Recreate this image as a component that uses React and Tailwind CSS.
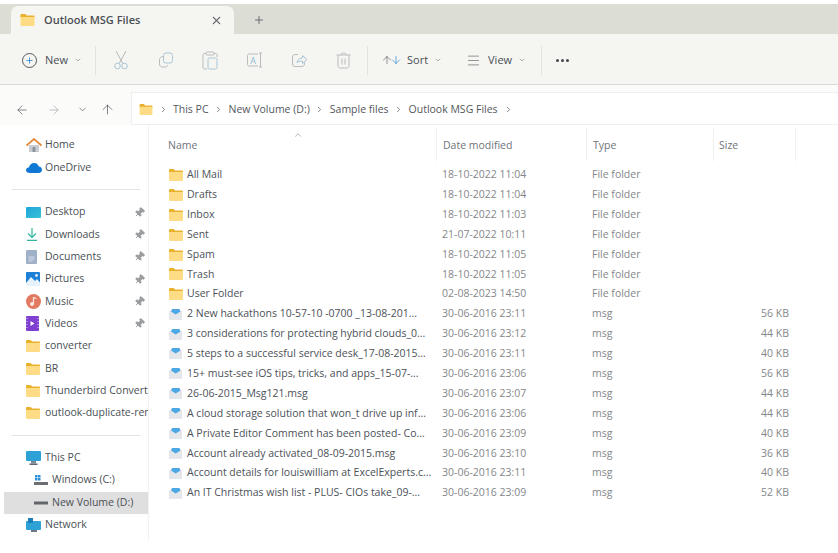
import React from 'react';
import { ArrowLeft, ArrowRight, ArrowUp, ChevronDown, ChevronRight, ChevronUp, Menu, Pin, Plus, X } from 'lucide-react';

const font = { fontFamily: '"Open Sans", "Noto Sans", sans-serif' };

// Folder icon, yellow with a darker tab
const Folder = ({ className = 'w-[14px] h-[12px]' }) => (
  <svg viewBox="0 0 14 12" className={className}>
    <path d="M0 1.2C0 .5.5 0 1.2 0h3.4l1.6 1.6h6.6c.7 0 1.2.5 1.2 1.2V4H0z" fill="#e8b22e" />
    <path d="M0 3h14v7.8c0 .7-.5 1.2-1.2 1.2H1.2C.5 12 0 11.500 0 10.800z" fill="#fddc85" />
  </svg>
);

// Icon of a .msg file: pale envelope with a blue flap
const MsgIcon = () => (
  <svg viewBox="0 0 13 11" className="w-[13px] h-[11px]">
    <rect x="0" y="2" width="13" height="9" fill="#e4e6ea" />
    <path d="M3 0h7.500l1 2.500L6.700 5.500 2 2.500z" fill="#4fa8e6" />
  </svg>
);

const HomeIcon = () => (
  <svg viewBox="0 0 16 14" className="w-4 h-[14px]">
    <path d="M3 7h10v7H3z" fill="#c9ccd1" />
    <path d="M6.500 9h3v5h-3z" fill="#8f959c" />
    <path d="M.5 7.500 8 1l7.500 6.500" fill="none" stroke="#e08b3e" strokeWidth="1.800" />
  </svg>
);

const CloudIcon = () => (
  <svg viewBox="0 0 16 10" className="w-4 h-[10px]">
    <path d="M4 10C1.500 10 0 8.800 0 7.200 0 5.700 1.200 4.700 2.800 4.600 3.500 2 5.500 0 8.200 0c2.400 0 4 1.500 4.600 3.600 1.900.1 3.200 1.500 3.200 3.200 0 1.800-1.400 3.200-3.300 3.200z" fill="#0f78d4" />
  </svg>
);

const DesktopIcon = () => (
  <svg viewBox="0 0 15 11" className="w-[15px] h-[11px]">
    <defs>
      <linearGradient id="desk" x1="0" y1="0" x2="1" y2="1">
        <stop offset="0" stopColor="#1fa5d8" />
        <stop offset="1" stopColor="#36c2d6" />
      </linearGradient>
    </defs>
    <rect width="15" height="11" rx="1" fill="url(#desk)" />
  </svg>
);

const DownloadIcon = () => (
  <svg viewBox="0 0 12 13" className="w-3 h-[13px]" fill="none" stroke="#2fb59c" strokeWidth="1.200">
    <path d="M6 0v9M2 5.500 6 9.500l4-4M1 12.400h10" />
  </svg>
);

const DocumentsIcon = () => (
  <svg viewBox="0 0 11 14" className="w-[11px] h-[14px]">
    <rect width="11" height="14" rx="1" fill="#9fb0c9" />
    <path d="M2.500 7h6M2.500 9h6M2.500 11h4" stroke="#e4e9f1" strokeWidth=".8" />
  </svg>
);

const PicturesIcon = () => (
  <svg viewBox="0 0 14 14" className="w-[14px] h-[14px]">
    <rect width="14" height="14" rx="1" fill="#1d7fd6" />
    <path d="M0 11 5 5l4 4 2-2 3 3.500V14H0z" fill="#e8f2fb" />
    <circle cx="10.500" cy="3.500" r="1.400" fill="#e8f2fb" />
  </svg>
);

const MusicIcon = () => (
  <svg viewBox="0 0 15 15" className="w-[15px] h-[15px]">
    <circle cx="7.500" cy="7.500" r="7.500" fill="#e27a62" />
    <circle cx="6" cy="10" r="2" fill="#fbe6e2" />
    <path d="M7.500 10V3.500l3 1" fill="none" stroke="#fbe6e2" strokeWidth="1.200" />
  </svg>
);

const VideosIcon = () => (
  <svg viewBox="0 0 13 15" className="w-[13px] h-[15px]">
    <rect width="13" height="15" rx="1" fill="#7f3fd0" />
    <path d="M4.500 5v5l4-2.500z" fill="#fff" />
    <path d="M1 2v1M1 5v1M1 8v1M1 11v1M12 2v1M12 5v1M12 8v1M12 11v1" stroke="#e3c8ff" strokeWidth="1" />
  </svg>
);

const PcIcon = () => (
  <svg viewBox="0 0 15 14" className="w-[15px] h-[14px]">
    <rect width="15" height="10" rx="1" fill="#2ea2d6" />
    <rect x="5" y="10" width="5" height="2.500" fill="#7c8a96" />
    <rect x="3.500" y="12.500" width="8" height="1.500" fill="#5d6872" />
  </svg>
);

const WindowsDrive = () => (
  <svg viewBox="0 0 14 11" className="w-[14px] h-[11px]">
    <rect x="1" y="0" width="2.500" height="2.500" fill="#2a8fd8" />
    <rect x="4" y="0" width="2.500" height="2.500" fill="#2a8fd8" />
    <rect x="1" y="3" width="2.500" height="2.500" fill="#2a8fd8" />
    <rect x="4" y="3" width="2.500" height="2.500" fill="#2a8fd8" />
    <rect x="0" y="7" width="14" height="3" fill="#6b6f73" />
  </svg>
);

const VolumeDrive = () => (
  <svg viewBox="0 0 14 4" className="w-[14px] h-1">
    <rect width="14" height="3" y=".5" fill="#62666a" />
  </svg>
);

const NetworkIcon = () => (
  <svg viewBox="0 0 15 14" className="w-[15px] h-[14px]">
    <rect x="0" y="3" width="15" height="9" rx="1" fill="#2ea2d6" />
    <rect x="2" y="0" width="5" height="5" fill="#1c7fb8" />
    <rect x="5" y="12" width="6" height="2" fill="#6a7680" />
  </svg>
);

// Command bar icons, all disabled grey
const CutIcon = () => (
  <svg viewBox="0 0 16 20" className="w-4 h-5" fill="none" stroke="#b4b9ba" strokeWidth="1">
    <path d="M3 1l6.800 12.500M13 1 6.200 13.500" />
    <circle cx="4.500" cy="16" r="2.800" stroke="#a9c4d6" />
    <circle cx="11.500" cy="16" r="2.800" stroke="#a9c4d6" />
  </svg>
);

const CopyIcon = () => (
  <svg viewBox="0 0 16 16" className="w-4 h-4" fill="none" stroke="#b9bdbd" strokeWidth="1">
    <rect x="5.500" y="1" width="9" height="10" rx="2.500" stroke="#a9c4d6" />
    <path d="M5.500 4.500C3 4.500 1.500 5.500 1.500 8v4c0 2 1 3 3 3h2.500c1.500 0 2.500-.8 2.700-2" />
  </svg>
);

const PasteIcon = () => (
  <svg viewBox="0 0 16 19" className="w-4 h-[19px]" fill="none" stroke="#b9bdbd" strokeWidth="1">
    <path d="M4 2.500H2.500C1.500 2.500 1 3 1 4v12.500c0 1 .5 1.500 1.500 1.500H5M12 2.500h1.500c1 0 1.500.5 1.500 1.500v2" />
    <rect x="4" y="1" width="8" height="3" rx="1" />
    <rect x="6" y="7" width="9" height="11" rx="1.500" stroke="#a9c4d6" />
  </svg>
);

const RenameIcon = () => (
  <svg viewBox="0 0 18 18" className="w-[18px] h-[18px]" fill="none" stroke="#b9bdbd" strokeWidth="1">
    <path d="M12 3H3C2 3 1.500 3.500 1.500 4.500v9c0 1 .5 1.500 1.500 1.500h9" />
    <path d="M14.500 2v14M13 2h3M13 16h3" />
    <text x="7" y="12.500" fontSize="9" textAnchor="middle" fill="#8fb6d4" stroke="none">A</text>
  </svg>
);

const ShareIcon = () => (
  <svg viewBox="0 0 17 16" className="w-[17px] h-4" fill="none" stroke="#b9bdbd" strokeWidth="1">
    <path d="M7 2.500H4C2.500 2.500 1.500 3.500 1.500 5v7c0 1.500 1 2.500 2.500 2.500h7c1.500 0 2.500-1 2.500-2.500v-1.500" />
    <path d="M6 10.500C6.500 7.500 8.500 6 11.500 6V3.500L16 7.500l-4.500 4V9C9.500 9 7.500 9.500 6 10.500z" stroke="#a9c4d6" />
  </svg>
);

const TrashIcon = () => (
  <svg viewBox="0 0 15 17" className="w-[15px] h-[17px]" fill="none" stroke="#b9bdbd" strokeWidth="1">
    <path d="M.5 3h14M5 3V2.500C5 1.500 5.800 1 7.500 1S10 1.500 10 2.500V3" />
    <path d="M2 3v10.500C2 15 3 16 4.500 16h6c1.500 0 2.500-1 2.500-2.500V3" />
    <path d="M6 6.500v6M9 6.500v6" />
  </svg>
);

const SortIcon = () => (
  <span className="flex text-[#1c7fc9]">
    <ArrowUp size={12} className="text-[#55595d] -mr-[3px]" strokeWidth={1.300} />
    <ArrowUp size={12} className="rotate-180" strokeWidth={1.300} />
  </span>
);

const sideItems = [
  { name: 'Desktop', icon: <DesktopIcon /> },
  { name: 'Downloads', icon: <DownloadIcon /> },
  { name: 'Documents', icon: <DocumentsIcon /> },
  { name: 'Pictures', icon: <PicturesIcon /> },
  { name: 'Music', icon: <MusicIcon /> },
  { name: 'Videos', icon: <VideosIcon /> },
];

const sideFolders = ['converter', 'BR', 'Thunderbird Converter', 'outlook-duplicate-remover'];

const folders = [
  ['All Mail', '18-10-2022 11:04'],
  ['Drafts', '18-10-2022 11:04'],
  ['Inbox', '18-10-2022 11:03'],
  ['Sent', '21-07-2022 10:11'],
  ['Spam', '18-10-2022 11:05'],
  ['Trash', '18-10-2022 11:05'],
  ['User Folder', '02-08-2023 14:50'],
];

const messages = [
  ['2 New hackathons 10-57-10 -0700 _13-08-201...', '30-06-2016 23:11', '56 KB'],
  ['3 considerations for protecting hybrid clouds_0...', '30-06-2016 23:12', '44 KB'],
  ['5 steps to a successful service desk_17-08-2015...', '30-06-2016 23:11', '40 KB'],
  ['15+ must-see iOS tips, tricks, and apps_15-07-...', '30-06-2016 23:06', '56 KB'],
  ['26-06-2015_Msg121.msg', '30-06-2016 23:07', '44 KB'],
  ['A cloud storage solution that won_t drive up inf...', '30-06-2016 23:06', '44 KB'],
  ['A Private Editor Comment has been posted- Co...', '30-06-2016 23:09', '40 KB'],
  ['Account already activated_08-09-2015.msg', '30-06-2016 23:10', '36 KB'],
  ['Account details for louiswilliam at ExcelExperts.c...', '30-06-2016 23:11', '40 KB'],
  ['An IT Christmas wish list - PLUS- CIOs take_09-...', '30-06-2016 23:09', '52 KB'],
];

const SideRow = ({ icon, label, pinned, indent, active }) => (
  <div className={`h-[22.35px] flex items-center overflow-hidden whitespace-nowrap ${active ? 'bg-[#dfdfdf] ml-[4px] pl-[30px]' : indent ? 'pl-[34px]' : 'pl-[26px]'}`}>
    <span className={`${indent || active ? 'w-[18px]' : 'w-[19px]'} shrink-0 flex items-center`}>{icon}</span>
    <span className="text-[10.500px] text-[#4a4f55]">{label}</span>
    {pinned && <Pin size={11} className="ml-auto mr-[3px] shrink-0 rotate-45 text-[#9a9c9e] fill-[#9a9c9e]" />}
  </div>
);

const Row = ({ icon, name, date, type, size }) => (
  <div className="h-[19.9px] grid grid-cols-[287px_150px_127px_76px] items-center whitespace-nowrap text-[10.500px]">
    <div className="flex items-center pl-[20px] text-[#4c5157]">
      <span className="w-[18px] shrink-0 flex items-center">{icon}</span>
      <span>{name}</span>
    </div>
    <div className="pl-[6px] text-[#84878a]">{date}</div>
    <div className="pl-[6px] text-[#84878a]">{type}</div>
    <div className="text-right text-[#84878a]">{size}</div>
  </div>
);

const ToolIcon = ({ children }) => (
  <span className="w-[44.500px] flex justify-center">{children}</span>
);

const Crumb = ({ children }) => (
  <>
    <ChevronRight size={9} className="text-[#55595d] mx-[5.500px]" />
    <span>{children}</span>
  </>
);

export default function App() {
  return (
    <div className="w-[838px] h-[553px] bg-white overflow-hidden flex flex-col" style={font}>
      <div className="h-[4px] bg-white" />

      {/* Tab bar */}
      <div className="h-[30px] bg-[#dcded5] flex items-end pl-[11px]">
        <div className="w-[223px] h-[28px] bg-[#f5f6f2] rounded-t-[7px] flex items-center pl-[9px] pr-[11px]">
          <Folder className="w-[15px] h-[12px]" />
          <span className="ml-[9px] text-[11px] font-semibold text-[#4b4f54]">Outlook MSG Files</span>
          <X size={13} className="ml-auto text-[#6a6d70]" />
        </div>
        <Plus size={12} className="ml-[19px] mb-[8px] text-[#6a6d70]" />
      </div>

      {/* Command bar */}
      <div className="h-[51px] pt-[2px] bg-[#f5f6f2] border-b border-[#d9dad7] flex items-center pl-[22px]">
        <span className="w-[15px] h-[15px] rounded-full border border-[#55595d] flex items-center justify-center">
          <Plus size={9} className="text-[#1c7fc9]" />
        </span>
        <span className="ml-[8px] text-[11px] text-[#4a4f55]">New</span>
        <ChevronDown size={8} className="ml-[6px] text-[#8a8d90]" />
        <span className="ml-[13px] mr-[3px] w-px h-[29px] bg-[#e3e4e1]" />
        <ToolIcon><CutIcon /></ToolIcon>
        <ToolIcon><CopyIcon /></ToolIcon>
        <ToolIcon><PasteIcon /></ToolIcon>
        <ToolIcon><RenameIcon /></ToolIcon>
        <ToolIcon><ShareIcon /></ToolIcon>
        <ToolIcon><TrashIcon /></ToolIcon>
        <span className="ml-[1px] w-px h-[29px] bg-[#e3e4e1]" />
        <span className="ml-[13px]"><SortIcon /></span>
        <span className="ml-[5px] text-[11px] text-[#4a4f55]">Sort</span>
        <ChevronDown size={8} className="ml-[6px] text-[#8a8d90]" />
        <Menu size={15} strokeWidth={1} className="ml-[24px] text-[#55595d]" />
        <span className="ml-[7px] text-[11px] text-[#4a4f55]">View</span>
        <ChevronDown size={8} className="ml-[6px] text-[#8a8d90]" />
        <span className="ml-[15px] w-px h-[29px] bg-[#e3e4e1]" />
        <span className="ml-[14px] flex gap-[2px]">
          <span className="w-[3px] h-[3px] rounded-full bg-[#44484c]" />
          <span className="w-[3px] h-[3px] rounded-full bg-[#44484c]" />
          <span className="w-[3px] h-[3px] rounded-full bg-[#44484c]" />
        </span>
      </div>

      {/* Address row */}
      <div className="h-[40px] flex items-end bg-[#fbfbfa]">
        <div className="w-[131px] h-[33px] pt-[2px] flex items-center pl-[15px] text-[#55595d]">
          <ArrowLeft size={14} strokeWidth={1.200} />
          <ArrowRight size={14} strokeWidth={1.200} className="ml-[18px] text-[#a5a8aa]" />
          <ChevronDown size={11} strokeWidth={1.500} className="ml-[16px]" />
          <ArrowUp size={15} strokeWidth={1.200} className="ml-[12px]" />
        </div>
        <div className="flex-1 h-[33px] pt-[2px] bg-white border border-[#eeeeee] border-r-0 flex items-center pl-[7px] text-[10.500px] text-[#54585d]">
          <Folder className="w-[14px] h-[11px]" />
          <Crumb>This PC</Crumb>
          <Crumb>New Volume (D:)</Crumb>
          <Crumb>Sample files</Crumb>
          <Crumb>Outlook MSG Files</Crumb>
          <ChevronRight size={9} className="text-[#55595d] ml-[6px]" />
        </div>
      </div>

      <div className="flex-1 flex min-h-0">
        {/* Navigation pane */}
        <aside className="w-[149px] h-[415px] shrink-0 border-r border-[#f1f1f1] pt-[9px]">
          <SideRow icon={<HomeIcon />} label="Home" />
          <SideRow icon={<CloudIcon />} label="OneDrive" />
          <div className="h-[22.35px] flex items-center pl-[12px] pr-[8px]"><div className="h-px w-full bg-[#e4e4e4]" /></div>
          {sideItems.map(item => (
            <SideRow key={item.name} icon={item.icon} label={item.name} pinned />
          ))}
          {sideFolders.map(name => (
            <SideRow key={name} icon={<Folder />} label={name} />
          ))}
          <div className="h-[22.35px] flex items-center pl-[12px] pr-[8px]"><div className="h-px w-full bg-[#e4e4e4]" /></div>
          <SideRow icon={<PcIcon />} label="This PC" />
          <SideRow icon={<WindowsDrive />} label="Windows (C:)" indent />
          <SideRow icon={<VolumeDrive />} label="New Volume (D:)" active />
          <SideRow icon={<NetworkIcon />} label="Network" />
        </aside>

        {/* File list */}
        <main className="flex-1 min-w-0">
          <div className="h-[39px] relative grid grid-cols-[287px_150px_127px_83px] text-[10.500px] text-[#70747a]">
            <ChevronUp size={10} className="absolute left-[144px] top-[5px] text-[#a0a3a6]" />
            <div className="flex items-center pl-[19px] pt-[3px]">Name</div>
            <div className="flex items-center pl-[6px] pt-[3px] border-l border-[#f0f0f0] my-[3px]">Date modified</div>
            <div className="flex items-center pl-[6px] pt-[3px] border-l border-[#f0f0f0] my-[3px]">Type</div>
            <div className="flex items-center pl-[5px] pt-[3px] border-x border-[#f0f0f0] my-[3px]">Size</div>
          </div>
          <div className="pt-[1px]">
            {folders.map(([name, date]) => (
              <Row key={name} icon={<Folder />} name={name} date={date} type="File folder" />
            ))}
            {messages.map(([name, date, size]) => (
              <Row key={name} icon={<MsgIcon />} name={name} date={date} type="msg" size={size} />
            ))}
          </div>
        </main>
      </div>
    </div>
  );
}
